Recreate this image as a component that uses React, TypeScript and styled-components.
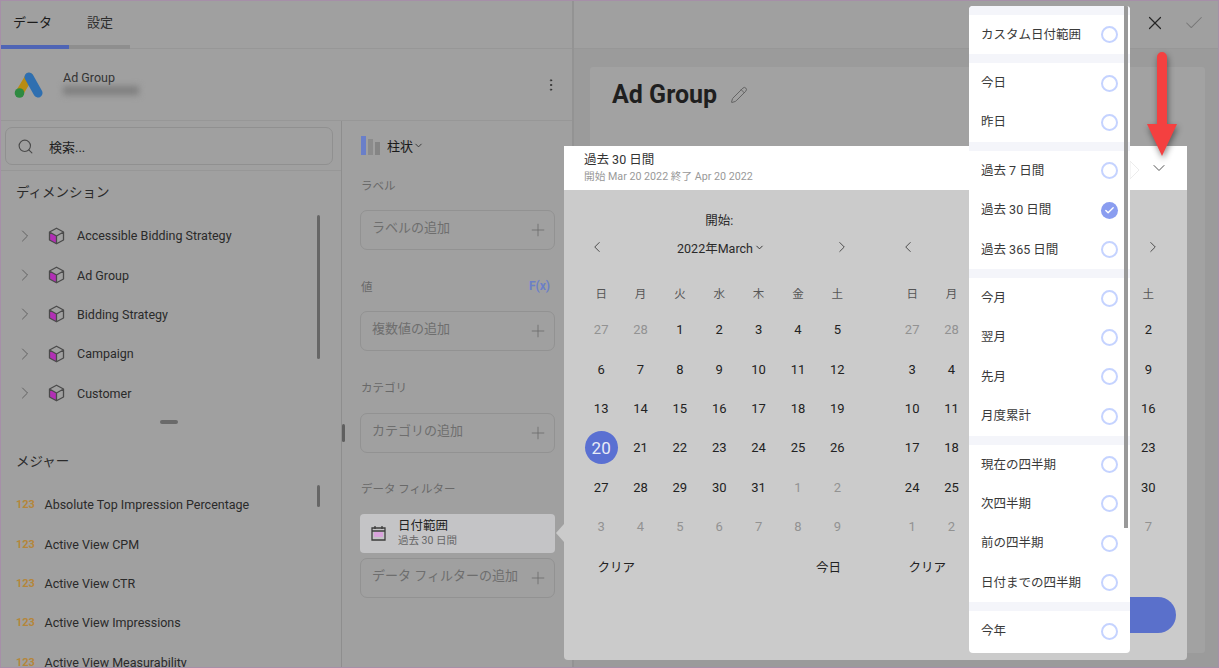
import React from 'react';
import styled, { createGlobalStyle } from 'styled-components';
import { Check, ChevronDown, ChevronLeft, ChevronRight, EllipsisVertical, Pencil, Plus, Search, X } from 'lucide-react';

const FONT = '"Roboto", "Noto Sans CJK JP", sans-serif';

const GlobalStyle = createGlobalStyle`
  html, body { margin: 0; padding: 0; background: #9b9b9b; }
  * { box-sizing: border-box; }
  body { font-family: ${FONT}; color: #222; }
`;

const Root = styled.div`
  position: relative;
  width: 1219px;
  height: 668px;
  overflow: hidden;
  display: flex;
  border: 1px solid #a68fa8;
  background: #9b9b9b;
`;

const LeftPane = styled.div`
  width: 573px;
  flex: none;
  display: flex;
  flex-direction: column;
  background: #a0a0a0;
  border-right: 2px solid #939393;
`;
const TabBar = styled.div`
  height: 48px;
  flex: none;
  display: flex;
  border-bottom: 1px solid #979797;
`;
const Tab = styled.div<{ $active?: boolean; $width: number }>`
  width: ${p => p.$width}px;
  height: 48px;
  padding: 13px 0 0 ${p => (p.$active ? 12 : 18)}px;
  font-size: 13px;
  line-height: 18px;
  color: ${p => (p.$active ? '#1c1c1c' : '#2e2e2e')};
  border-bottom: 4px solid ${p => (p.$active ? '#4f65b5' : '#8e8e8e')};
`;
const SourceHeader = styled.div`
  height: 72px;
  flex: none;
  display: flex;
  align-items: center;
  padding: 0 13px;
  border-bottom: 1px solid #979797;
`;
const SourceText = styled.div`
  margin-left: 19px;
  flex: 1;
  margin-top: -4px;
`;
const SourceName = styled.div`
  font-size: 12.5px;
  line-height: 15px;
  color: #333;
`;
const BlurredLine = styled.div`
  width: 76px;
  height: 9px;
  margin-top: 1px;
  background: #7f7f7f;
  filter: blur(3px);
`;
const Columns = styled.div`
  flex: 1;
  display: flex;
  min-height: 0;
`;
const FieldsColumn = styled.div`
  width: 341px;
  flex: none;
  display: flex;
  flex-direction: column;
  border-right: 1px solid #8e8e8e;
  overflow: hidden;
`;
const SearchWrap = styled.div`
  height: 50px;
  flex: none;
  padding: 6px 4px 0;
  border-bottom: 1px solid #979797;
`;
const SearchBox = styled.div`
  height: 38px;
  width: 328px;
  display: flex;
  align-items: center;
  padding-left: 11px;
  gap: 15px;
  border: 1px solid #909090;
  border-radius: 7px;
  font-size: 13px;
  color: #1e1e1e;
`;
const SectionTitle = styled.div<{ $height: number; $lift: number }>`
  height: ${p => p.$height}px;
  flex: none;
  display: flex;
  align-items: center;
  padding: 0 0 ${p => p.$lift}px 15px;
  font-size: 13.5px;
  color: #2a2a2a;
`;
const FieldList = styled.div`
  position: relative;
  flex: none;
`;
const Scrollbar = styled.div<{ $top: number; $height: number }>`
  position: absolute;
  left: 316px;
  top: ${p => p.$top}px;
  width: 3px;
  height: ${p => p.$height}px;
  border-radius: 2px;
  background: #666;
`;
const TreeRow = styled.div`
  height: 39.4px;
  display: flex;
  align-items: center;
  padding-left: 14px;
  font-size: 12.5px;
  color: #2a2a2a;
`;
const CubeIcon = styled.svg`
  margin: 0 12px 0 13px;
  flex: none;
`;
const SplitHandleRow = styled.div`
  height: 24px;
  flex: none;
  padding: 7px 0 0 159px;
`;
const SplitHandle = styled.div`
  width: 18px;
  height: 4px;
  border-radius: 2px;
  background: #6a6a6a;
`;
const MeasureRow = styled.div`
  height: 39.4px;
  display: flex;
  align-items: center;
  padding-left: 15px;
  font-size: 12.5px;
  color: #2a2a2a;
`;
const NumberBadge = styled.span`
  width: 28.5px;
  flex: none;
  font-size: 11px;
  font-weight: 700;
  color: #b5863a;
`;

const BuilderColumn = styled.div`
  position: relative;
  flex: 1;
  padding: 0 16px 0 19px;
`;
const ColumnGrip = styled.div`
  position: absolute;
  left: 0;
  top: 303px;
  width: 3px;
  height: 18px;
  border-radius: 2px;
  background: #5f5f5f;
`;
const ChartPicker = styled.div`
  height: 52px;
  display: flex;
  align-items: center;
  padding-bottom: 4px;
  font-size: 13px;
  color: #1a1a1a;
`;
const ChartBars = styled.svg`
  margin-right: 6px;
`;
const SlotLabel = styled.div`
  height: 24px;
  margin-bottom: 13px;
  display: flex;
  align-items: center;
  justify-content: space-between;
  padding: 0 6px 1px 0;
  font-size: 11.5px;
  color: #696969;
`;
const Fx = styled.span`
  font-size: 12px;
  font-weight: 700;
  color: #6b7fc7;
`;
const Slot = styled.div<{ $last?: boolean }>`
  width: 195px;
  margin-left: -1px;
  height: 40px;
  margin-bottom: ${p => (p.$last ? 0 : 24.3)}px;
  display: flex;
  align-items: center;
  justify-content: space-between;
  padding: 0 6px 0 11px;
  border: 1px solid #929292;
  border-radius: 7px;
  font-size: 13px;
  color: #6e6e6e;
`;
const SlotText = styled.span`
  padding-bottom: 7px;
`;
const FilterPill = styled.div`
  width: 195px;
  margin-left: -1px;
  height: 39px;
  margin-bottom: 5px;
  display: flex;
  align-items: center;
  padding-left: 11px;
  border-radius: 4px;
  background: #c4c4c6;
`;
const PillText = styled.div`
  margin-left: 12px;
`;
const PillTitle = styled.div`
  font-size: 12.5px;
  line-height: 15px;
  color: #222;
`;
const PillSub = styled.div`
  font-size: 10.5px;
  line-height: 16px;
  color: #666;
`;

const RightPane = styled.div`
  flex: 1;
  display: flex;
  flex-direction: column;
`;
const TopBar = styled.div`
  height: 48px;
  flex: none;
  display: flex;
  justify-content: flex-end;
  align-items: center;
  gap: 17px;
  padding: 0 13px 3px 0;
  background: #a0a0a0;
  border-bottom: 1px solid #979797;
`;
const Canvas = styled.div`
  flex: 1;
  padding: 18px 13px 14px 16px;
`;
const Card = styled.div`
  height: 100%;
  padding: 10px 22px;
  background: #a2a2a2;
  border-radius: 3px;
`;
const CardTitle = styled.h1`
  margin: 0;
  display: flex;
  align-items: center;
  gap: 13px;
  font-size: 25px;
  line-height: 36px;
  font-weight: 700;
  color: #1f1f1f;
`;

const Popover = styled.div`
  position: absolute;
  left: 563px;
  top: 145px;
  width: 623px;
  height: 514px;
  background: #cbcbcb;
  border-radius: 0 0 4px 4px;
`;
const PopoverNotch = styled.div`
  position: absolute;
  left: -8px;
  top: 378px;
  border-style: solid;
  border-width: 9px 8px 9px 0;
  border-color: transparent #cbcbcb transparent transparent;
`;
const PopoverHeader = styled.div`
  height: 44px;
  display: flex;
  flex-direction: column;
  justify-content: center;
  padding: 0 0 1px 20px;
  background: #fff;
`;
const HeaderTitle = styled.div`
  font-size: 12.5px;
  line-height: 17px;
  color: #333;
`;
const HeaderSub = styled.div`
  font-size: 10.7px;
  line-height: 17px;
  color: #999;
`;
const Calendars = styled.div`
  display: flex;
  gap: 35.5px;
  padding: 16px 0 0 17.5px;
`;
const Calendar = styled.div`
  width: 275.5px;
  flex: none;
`;
const Caption = styled.div`
  height: 26px;
  display: flex;
  align-items: center;
  justify-content: center;
  font-size: 12.5px;
  color: #2a2a2a;
`;
const MonthNav = styled.div`
  height: 30px;
  display: flex;
  align-items: center;
  justify-content: space-between;
  padding: 0 6px 0 6.5px;
  margin-bottom: 16px;
  color: #4a4a4a;
`;
const MonthLabel = styled.div`
  display: flex;
  align-items: center;
  gap: 1px;
  padding-left: 3px;
  font-size: 12.5px;
  color: #2a2a2a;
`;
const WeekGrid = styled.div`
  display: grid;
  grid-template-columns: repeat(7, 1fr);
  height: 32px;
`;
const DayGrid = styled.div`
  display: grid;
  grid-template-columns: repeat(7, 1fr);
  grid-auto-rows: 39.4px;
`;
const WeekHead = styled.div`
  display: flex;
  align-items: center;
  justify-content: center;
  padding-bottom: 2px;
  font-size: 11.5px;
  color: #555;
`;
const Day = styled.div<{ $muted?: boolean; $selected?: boolean }>`
  justify-self: center;
  align-self: center;
  display: flex;
  align-items: center;
  justify-content: center;
  width: 33px;
  height: 33px;
  border-radius: 50%;
  font-size: ${p => (p.$selected ? 17 : 13)}px;
  font-weight: 400;
  color: ${p => (p.$selected ? '#e8ebf7' : p.$muted ? '#929292' : '#222')};
  background: ${p => (p.$selected ? '#5a70d2' : 'transparent')};
`;
const CalendarFooter = styled.div`
  height: 36px;
  margin-top: 3px;
  display: flex;
  align-items: center;
  justify-content: space-between;
  padding: 0 16px 2px 16px;
  font-size: 12.5px;
  color: #222;
`;
const ActionRow = styled.div`
  display: flex;
  justify-content: flex-end;
  margin-top: 12px;
  padding-right: 11px;
`;
const ApplyButton = styled.div`
  width: 110px;
  height: 36px;
  border-radius: 18px;
  background: #5a70cb;
`;

const RangeMenu = styled.div`
  position: absolute;
  left: 968px;
  top: 5px;
  width: 161px;
  height: 647px;
  overflow: hidden;
  background: #fff;
  border-radius: 4px;
`;
const MenuThumb = styled.div`
  position: absolute;
  right: 2px;
  top: 0;
  width: 4px;
  height: 522px;
  background: #999;
`;
const MenuBand = styled.div`
  height: 9px;
  background: #f4f5fa;
`;
const MenuItem = styled.div`
  height: 39.4px;
  display: flex;
  align-items: center;
  justify-content: space-between;
  padding: 0 12px;
  font-size: 12.5px;
  color: #3a3a3a;
`;
const MenuLabel = styled.span`
  padding-bottom: 3px;
`;
const Radio = styled.span<{ $checked?: boolean }>`
  width: 17px;
  height: 17px;
  flex: none;
  display: flex;
  align-items: center;
  justify-content: center;
  border-radius: 50%;
  border: ${p => (p.$checked ? 'none' : '2px solid #c5d3ff')};
  background: ${p => (p.$checked ? '#8a9df0' : '#fff')};
  color: #fff;
`;
const MenuCaret = styled.svg`
  position: absolute;
  left: 1129px;
  top: 158px;
`;
const HeaderChevron = styled(ChevronDown)`
  position: absolute;
  left: 1148px;
  top: 157px;
  color: #555;
`;
const RedArrow = styled.svg`
  position: absolute;
  left: 1141px;
  top: 45px;
  filter: drop-shadow(1px 3px 3px rgba(0, 0, 0, 0.45));
`;

const WEEK = ['日', '月', '火', '水', '木', '金', '土'];
// columns of the second month that sit behind the range menu stay empty
const COVERED = [2, 3, 4, 5];
const range = (from: number, to: number) => Array.from({ length: to - from + 1 }, (_, i) => from + i);

const MARCH = [...range(27, 28), ...range(1, 31), ...range(1, 9)];
const APRIL = [...range(27, 31), ...range(1, 30), ...range(1, 7)];

const DIMENSIONS = ['Accessible Bidding Strategy', 'Ad Group', 'Bidding Strategy', 'Campaign', 'Customer'];
const MEASURES = [
  'Absolute Top Impression Percentage',
  'Active View CPM',
  'Active View CTR',
  'Active View Impressions',
  'Active View Measurability',
];
const MENU_GROUPS = [
  ['カスタム日付範囲'],
  ['今日', '昨日'],
  ['過去 7 日間', '過去 30 日間', '過去 365 日間'],
  ['今月', '翌月', '先月', '月度累計'],
  ['現在の四半期', '次四半期', '前の四半期', '日付までの四半期'],
  ['今年'],
];

const AdsLogo = () => (
  <svg width="30" height="28" viewBox="0 0 30 28">
    <path d="M6 21 L15 6" stroke="#b98c12" strokeWidth="8" strokeLinecap="round" />
    <path d="M15 6 L24 22" stroke="#2f6fb0" strokeWidth="9" strokeLinecap="round" />
    <circle cx="5.5" cy="22" r="4.8" fill="#2f8a41" />
  </svg>
);

const Cube = () => (
  <CubeIcon width="17" height="18" viewBox="0 0 17 18">
    <path d="M1.5 5 L8.5 9 V16.5 L1.5 13 Z" fill="#b22fb5" />
    <path d="M8.5 1.2 L15.5 5 V13 L8.5 16.8 L1.5 13 V5 Z M1.5 5 L8.5 9 L15.5 5 M8.5 9 V16.8" fill="none" stroke="#4a4a4a" strokeWidth="1.3" strokeLinejoin="round" />
  </CubeIcon>
);

const CalendarGlyph = () => (
  <svg width="15" height="16" viewBox="0 0 15 16">
    <rect x="3" y="7" width="9" height="5" fill="#d9a3dc" />
    <path d="M1 3 H14 V15 H1 Z M1 6 H14 M4 1 V4 M11 1 V4" fill="none" stroke="#3c3c3c" strokeWidth="1.3" />
  </svg>
);

const AddSlot = ({ text, last }: { text: string; last?: boolean }) => (
  <Slot $last={last}>
    <SlotText>{text}</SlotText>
    <Plus size={20} strokeWidth={1} color="#6e6e6e" />
  </Slot>
);

interface MonthGridProps {
  days: number[];
  firstCurrent: number;
  lastCurrent: number;
  selected?: number;
  covered?: number[];
}

const MonthGrid = ({ days, firstCurrent, lastCurrent, selected, covered = [] }: MonthGridProps) => (
  <DayGrid>
    {days.map((d, i) => (
      <Day key={i} $muted={i < firstCurrent || i > lastCurrent} $selected={d === selected && i >= firstCurrent && i <= lastCurrent}>
        {covered.includes(i % 7) ? '' : d}
      </Day>
    ))}
  </DayGrid>
);

const App = () => (
  <>
    <GlobalStyle />
    <Root>
      <LeftPane>
        <TabBar>
          <Tab $active $width={68}>データ</Tab>
          <Tab $width={61}>設定</Tab>
        </TabBar>
        <SourceHeader>
          <AdsLogo />
          <SourceText>
            <SourceName>Ad Group</SourceName>
            <BlurredLine />
          </SourceText>
          <EllipsisVertical size={16} strokeWidth={1.5} color="#333" />
        </SourceHeader>
        <Columns>
          <FieldsColumn>
            <SearchWrap>
              <SearchBox>
                <Search size={17} strokeWidth={1.6} color="#4a4a4a" />
                検索...
              </SearchBox>
            </SearchWrap>
            <SectionTitle $height={45} $lift={6}>ディメンション</SectionTitle>
            <FieldList>
              <Scrollbar $top={-1} $height={144} />
              {DIMENSIONS.map(name => (
                <TreeRow key={name}>
                  <ChevronRight size={20} strokeWidth={1} color="#555" />
                  <Cube />
                  {name}
                </TreeRow>
              ))}
            </FieldList>
            <SplitHandleRow>
              <SplitHandle />
            </SplitHandleRow>
            <SectionTitle $height={48} $lift={2}>メジャー</SectionTitle>
            <FieldList>
              <Scrollbar $top={0} $height={22} />
              {MEASURES.map(name => (
                <MeasureRow key={name}>
                  <NumberBadge>123</NumberBadge>
                  {name}
                </MeasureRow>
              ))}
            </FieldList>
          </FieldsColumn>
          <BuilderColumn>
            <ColumnGrip />
            <ChartPicker>
              <ChartBars width="20" height="19" viewBox="0 0 20 19">
                <rect x="0" y="0" width="5" height="19" fill="#6a7fc9" />
                <rect x="7" y="3" width="5" height="16" fill="#8c8c8c" />
                <rect x="14" y="6" width="5" height="13" fill="#858585" />
              </ChartBars>
              柱状
              <ChevronDown size={11} color="#333" />
            </ChartPicker>
            <SlotLabel>ラベル</SlotLabel>
            <AddSlot text="ラベルの追加" />
            <SlotLabel>
              値<Fx>F(x)</Fx>
            </SlotLabel>
            <AddSlot text="複数値の追加" />
            <SlotLabel>カテゴリ</SlotLabel>
            <AddSlot text="カテゴリの追加" />
            <SlotLabel>データ フィルター</SlotLabel>
            <FilterPill>
              <CalendarGlyph />
              <PillText>
                <PillTitle>日付範囲</PillTitle>
                <PillSub>過去 30 日間</PillSub>
              </PillText>
            </FilterPill>
            <AddSlot text="データ フィルターの追加" last />
          </BuilderColumn>
        </Columns>
      </LeftPane>
      <RightPane>
        <TopBar>
          <X size={22} strokeWidth={1.3} color="#262626" />
          <Check size={22} strokeWidth={1.1} color="#777" />
        </TopBar>
        <Canvas>
          <Card>
            <CardTitle>
              Ad Group
              <Pencil size={18} strokeWidth={1.2} color="#5c5c5c" />
            </CardTitle>
          </Card>
        </Canvas>
      </RightPane>

      <Popover>
        <PopoverNotch />
        <PopoverHeader>
          <HeaderTitle>過去 30 日間</HeaderTitle>
          <HeaderSub>開始 Mar 20 2022 終了 Apr 20 2022</HeaderSub>
        </PopoverHeader>
        <Calendars>
          <Calendar>
            <Caption>開始:</Caption>
            <MonthNav>
              <ChevronLeft size={18} strokeWidth={1.3} />
              <MonthLabel>
                2022年March
                <ChevronDown size={11} />
              </MonthLabel>
              <ChevronRight size={18} strokeWidth={1.3} />
            </MonthNav>
            <WeekGrid>
              {WEEK.map(w => (
                <WeekHead key={w}>{w}</WeekHead>
              ))}
            </WeekGrid>
            <MonthGrid days={MARCH} firstCurrent={2} lastCurrent={32} selected={20} />
            <CalendarFooter>
              <span>クリア</span>
              <span>今日</span>
            </CalendarFooter>
          </Calendar>
          <Calendar>
            <Caption />
            <MonthNav>
              <ChevronLeft size={18} strokeWidth={1.3} />
              <ChevronRight size={18} strokeWidth={1.3} />
            </MonthNav>
            <WeekGrid>
              {WEEK.map((w, i) => (
                <WeekHead key={w}>{COVERED.includes(i) ? '' : w}</WeekHead>
              ))}
            </WeekGrid>
            <MonthGrid days={APRIL} firstCurrent={5} lastCurrent={34} covered={COVERED} />
            <CalendarFooter>
              <span>クリア</span>
            </CalendarFooter>
          </Calendar>
        </Calendars>
        <ActionRow>
          <ApplyButton />
        </ActionRow>
      </Popover>

      <HeaderChevron size={20} strokeWidth={1.2} />
      <MenuCaret width="12" height="22" viewBox="0 0 12 22">
        <path d="M0 2 L9 11 L0 20 Z" fill="#fff" stroke="#ececec" />
      </MenuCaret>
      <RangeMenu>
        <MenuThumb />
        {MENU_GROUPS.map((group, i) => (
          <React.Fragment key={i}>
            <MenuBand />
            {group.map(item => (
              <MenuItem key={item}>
                <MenuLabel>{item}</MenuLabel>
                <Radio $checked={item === '過去 30 日間'}>
                  {item === '過去 30 日間' && <Check size={11} strokeWidth={3} />}
                </Radio>
              </MenuItem>
            ))}
          </React.Fragment>
        ))}
      </RangeMenu>
      <RedArrow width="40" height="112" viewBox="0 0 40 112">
        <path d="M15 11 a5 5 0 0 1 10 0 V78 H35 L20 110 L5 78 H15 Z" fill="#f44040" />
      </RedArrow>
    </Root>
  </>
);

export default App;
